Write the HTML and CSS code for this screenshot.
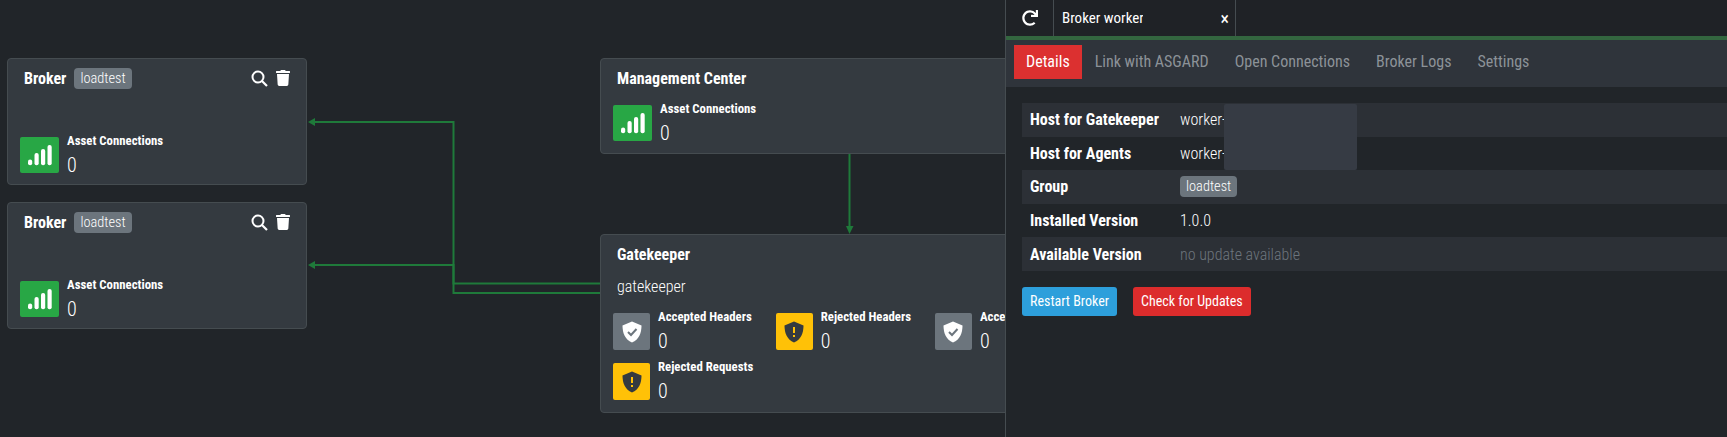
FILE: index.html
```html
<!DOCTYPE html>
<html lang="en">
<head>
  <meta charset="UTF-8" />
  <title>Broker worker</title>
  <link rel="stylesheet" href="styles.css">
</head>
<body>
  <svg class="defs" width="0" height="0">
    <symbol id="i-signal" viewBox="0 0 39 36">
      <g fill="#fff">
        <rect x="8" y="22.500" width="4.200" height="5.800" rx="2.100"/>
        <rect x="14.500" y="16" width="4.200" height="12.300" rx="2"/>
        <rect x="21" y="12" width="4.200" height="16.300" rx="2"/>
        <rect x="27.500" y="8" width="4.200" height="20.300" rx="2"/>
      </g>
    </symbol>
    <symbol id="i-shield" viewBox="0 0 20 22">
      <path d="M10 0.500 19.500 4.500C19.500 12 17 18.500 10 21.500 3 18.500 0.500 12 0.500 4.500Z"/>
    </symbol>
  </svg>

  <div class="canvas">
    <svg class="edges" width="1005" height="437">
      <g fill="none" stroke="#1f7a3a" stroke-width="2">
        <path d="M314 122H453.500V293H600"/>
        <path d="M314 265H453.500V283.500H600"/>
        <path d="M849.500 153V228"/>
      </g>
      <g fill="#1f7a3a">
        <path d="M308 122 315 118V126Z"/>
        <path d="M308 265 315 261V269Z"/>
        <path d="M849.500 234 846 226H853.500Z"/>
      </g>
    </svg>

    <div class="node broker broker-1">
      <div class="node-head">
        <span class="node-title">Broker</span>
        <span class="badge">loadtest</span>
        <span class="node-tools">
          <svg width="17" height="17" viewBox="0 0 17 17"><circle cx="7" cy="7" r="5.500" fill="none" stroke="#fff" stroke-width="2"/><path d="M11 11 16 16" stroke="#fff" stroke-width="2.200"/></svg>
          <svg width="14" height="16" viewBox="0 0 448 512"><path fill="#fff" d="M432 32H312l-9.400-18.700A24 24 0 0 0 281.100 0H166.800a23.720 23.720 0 0 0-21.400 13.300L136 32H16A16 16 0 0 0 0 48v32a16 16 0 0 0 16 16h416a16 16 0 0 0 16-16V48a16 16 0 0 0-16-16zM53.200 467a48 48 0 0 0 47.900 45h245.800a48 48 0 0 0 47.900-45L416 128H32z"/></svg>
        </span>
      </div>
      <div class="metric">
        <div class="metric-icon wide green"><svg width="39" height="36"><use href="#i-signal"/></svg></div>
        <div class="metric-text"><div class="metric-label">Asset Connections</div><div class="metric-value">0</div></div>
      </div>
    </div>

    <div class="node broker broker-2">
      <div class="node-head">
        <span class="node-title">Broker</span>
        <span class="badge">loadtest</span>
        <span class="node-tools">
          <svg width="17" height="17" viewBox="0 0 17 17"><circle cx="7" cy="7" r="5.500" fill="none" stroke="#fff" stroke-width="2"/><path d="M11 11 16 16" stroke="#fff" stroke-width="2.200"/></svg>
          <svg width="14" height="16" viewBox="0 0 448 512"><path fill="#fff" d="M432 32H312l-9.400-18.700A24 24 0 0 0 281.100 0H166.800a23.720 23.720 0 0 0-21.400 13.300L136 32H16A16 16 0 0 0 0 48v32a16 16 0 0 0 16 16h416a16 16 0 0 0 16-16V48a16 16 0 0 0-16-16zM53.200 467a48 48 0 0 0 47.900 45h245.800a48 48 0 0 0 47.900-45L416 128H32z"/></svg>
        </span>
      </div>
      <div class="metric">
        <div class="metric-icon wide green"><svg width="39" height="36"><use href="#i-signal"/></svg></div>
        <div class="metric-text"><div class="metric-label">Asset Connections</div><div class="metric-value">0</div></div>
      </div>
    </div>

    <div class="node mgmt">
      <div class="node-head"><span class="node-title">Management Center</span></div>
      <div class="metric">
        <div class="metric-icon wide green"><svg width="39" height="36"><use href="#i-signal"/></svg></div>
        <div class="metric-text"><div class="metric-label">Asset Connections</div><div class="metric-value">0</div></div>
      </div>
    </div>

    <div class="node gatekeeper">
      <div class="node-head"><span class="node-title">Gatekeeper</span></div>
      <div class="node-name">gatekeeper</div>
      <div class="metrics">
        <div class="metric">
          <div class="metric-icon grey">
            <svg width="20" height="22"><use href="#i-shield" fill="#fff"/><path d="M6 11 9 14 14.500 8" fill="none" stroke="#6c757d" stroke-width="2"/></svg>
          </div>
          <div class="metric-text"><div class="metric-label">Accepted Headers</div><div class="metric-value">0</div></div>
        </div>
        <div class="metric">
          <div class="metric-icon yellow">
            <svg width="20" height="22"><use href="#i-shield" fill="#343a40"/><path d="M10 6V12M10 14V16" stroke="#ffc107" stroke-width="2"/></svg>
          </div>
          <div class="metric-text"><div class="metric-label">Rejected Headers</div><div class="metric-value">0</div></div>
        </div>
        <div class="metric">
          <div class="metric-icon grey">
            <svg width="20" height="22"><use href="#i-shield" fill="#fff"/><path d="M6 11 9 14 14.500 8" fill="none" stroke="#6c757d" stroke-width="2"/></svg>
          </div>
          <div class="metric-text"><div class="metric-label">Accepted Requests</div><div class="metric-value">0</div></div>
        </div>
        <div class="metric">
          <div class="metric-icon yellow">
            <svg width="20" height="22"><use href="#i-shield" fill="#343a40"/><path d="M10 6V12M10 14V16" stroke="#ffc107" stroke-width="2"/></svg>
          </div>
          <div class="metric-text"><div class="metric-label">Rejected Requests</div><div class="metric-value">0</div></div>
        </div>
      </div>
    </div>
  </div>

  <div class="panel">
    <div class="tabbar">
      <div class="reload">
        <svg width="16" height="16" viewBox="0 0 512 512"><path fill="#fff" d="M500.330 0h-47.410a12 12 0 0 0-12 12.570l4 82.760A247.420 247.420 0 0 0 256 8C119.340 8 7.900 119.530 8 256.190 8.100 393.070 119.100 504 256 504a247.100 247.100 0 0 0 166.180-63.910 12 12 0 0 0 .48-17.430l-34-34a12 12 0 0 0-16.380-.55A176 176 0 1 1 402.100 157.800l-101.530-4.870a12 12 0 0 0-12.570 12v47.410a12 12 0 0 0 12 12h200.330a12 12 0 0 0 12-12V12a12 12 0 0 0-12-12z"/></svg>
      </div>
      <div class="tab">
        <span class="tab-title">Broker worker-</span>
        <span class="tab-close">×</span>
      </div>
    </div>
    <div class="nav">
      <a class="nav-item active">Details</a>
      <a class="nav-item">Link with ASGARD</a>
      <a class="nav-item">Open Connections</a>
      <a class="nav-item">Broker Logs</a>
      <a class="nav-item">Settings</a>
    </div>
    <div class="details">
      <div class="redact"></div>
      <div class="row"><div class="row-key">Host for Gatekeeper</div><div class="row-val">worker-</div></div>
      <div class="row"><div class="row-key">Host for Agents</div><div class="row-val">worker-</div></div>
      <div class="row"><div class="row-key">Group</div><div class="row-val"><span class="badge">loadtest</span></div></div>
      <div class="row"><div class="row-key">Installed Version</div><div class="row-val">1.0.0</div></div>
      <div class="row"><div class="row-key">Available Version</div><div class="row-val muted">no update available</div></div>
      <div class="actions">
        <button class="btn btn-blue">Restart Broker</button>
        <button class="btn btn-red">Check for Updates</button>
      </div>
    </div>
  </div>
</body>
</html>
```

FILE: styles.css
```css
* {
  box-sizing: border-box;
}
html, body {
  height: 100%;
}
body {
  margin: 0;
  display: flex;
  overflow: hidden;
  background: #212529;
  color: #fff;
  font-family: "Roboto Condensed", Roboto, "Liberation Sans Narrow", sans-serif;
  font-stretch: condensed;
  font-size: 16px;
}
.defs {
  position: absolute;
}

/* diagram */
.canvas {
  position: relative;
  width: 1005px;
  height: 437px;
  overflow: hidden;
}
.edges {
  position: absolute;
  left: 0;
  top: 0;
}
.node {
  position: absolute;
  background: #343a40;
  border: 1px solid #454c50;
  border-radius: 4px;
  padding: 8px 12px;
}
.broker {
  left: 7px;
  width: 300px;
}
.broker-1 {
  top: 58px;
  height: 127px;
}
.broker-2 {
  top: 202px;
  height: 127px;
}
.mgmt {
  left: 600px;
  top: 58px;
  width: 620px;
  height: 96px;
}
.gatekeeper {
  left: 600px;
  top: 234px;
  width: 620px;
  height: 179px;
}
.node-head {
  display: flex;
  align-items: center;
  height: 22px;
  padding-left: 4px;
  margin-bottom: 16px;
}
.node-title {
  font-size: 16px;
  font-weight: 700;
  margin-right: 8px;
}
.node-tools {
  margin-left: auto;
  display: flex;
  align-items: center;
  gap: 8px;
  padding-right: 4px;
}
.node-name {
  width: 73px;
  padding-left: 4px;
  margin-top: -6px;
  margin-bottom: 14px;
  overflow: hidden;
  white-space: nowrap;
  line-height: 24px;
  font-weight: 300;
}
.badge {
  display: inline-block;
  background: #6c757d;
  border-radius: 4px;
  padding: 0 6px;
  font-size: 14.400px;
  font-weight: 300;
  line-height: 21px;
  color: #fff;
}
.broker .metric {
  margin-top: 48px;
}
.metrics {
  display: flex;
  flex-wrap: wrap;
}
.metrics .metric {
  height: 37px;
  margin-right: 24px;
  margin-bottom: 13px;
}
.metric {
  display: flex;
  height: 36px;
}
.metric-icon {
  width: 37px;
  height: 37px;
  border-radius: 2px;
  display: flex;
  align-items: center;
  justify-content: center;
  margin-right: 8px;
}
.metric-icon.wide {
  width: 39px;
  height: 36px;
}
.metric-text {
  margin-top: -4px;
}
.metric-label {
  font-size: 12.800px;
  font-weight: 700;
  line-height: 15px;
}
.metric-value {
  font-size: 20px;
  font-weight: 300;
  line-height: 24px;
  margin-top: 5px;
}
.green {
  background: #28a745;
}
.grey {
  background: #6c757d;
}
.yellow {
  background: #ffc107;
}

/* side panel */
.panel {
  width: 722px;
  height: 437px;
  background: #212529;
  border-left: 1px solid #454c50;
}
.tabbar {
  display: flex;
  height: 36px;
  background: #1f2226;
}
.reload {
  width: 48px;
  display: flex;
  align-items: center;
  justify-content: center;
  border-right: 1px solid #454c50;
}
.tab {
  width: 182px;
  display: flex;
  align-items: center;
  justify-content: space-between;
  padding: 0 6px 0 8px;
  border-right: 1px solid #454c50;
  font-size: 15px;
}
.tab-title {
  width: 81px;
  overflow: hidden;
  white-space: nowrap;
}
.tab-close {
  font-size: 18px;
}
.nav {
  display: flex;
  align-items: center;
  height: 51px;
  padding: 0 0 3px 8px;
  background: #2f343b;
  border-top: 4px solid #33663f;
}
.nav-item {
  padding: 0 13px;
  line-height: 34px;
  font-size: 16px;
  color: #8c9298;
}
.nav-item.active {
  padding: 0 12px;
  background: #dc3030;
  color: #fff;
}
.details {
  position: relative;
  padding: 16px 0 0 16px;
}
.redact {
  position: absolute;
  left: 218px;
  top: 17px;
  width: 133px;
  height: 66px;
  border-radius: 2px;
  background: #363b44;
}
.row {
  display: flex;
  align-items: center;
  height: 33.600px;
}
.row:nth-child(even) {
  background: #2c3036;
}
.row-key {
  width: 158px;
  padding-left: 8px;
  font-weight: 700;
  font-size: 16px;
}
.row-val {
  font-size: 16px;
  font-weight: 300;
}
.muted {
  color: #6c757d;
}
.actions {
  display: flex;
  gap: 16px;
  margin-top: 16px;
}
.btn {
  height: 29px;
  padding: 0 8px;
  border: none;
  border-radius: 3px;
  color: #fff;
  font: inherit;
  font-stretch: condensed;
  font-size: 14px;
}
.btn-blue {
  background: #2d9fdb;
}
.btn-red {
  background: #dc2c2c;
}
```
